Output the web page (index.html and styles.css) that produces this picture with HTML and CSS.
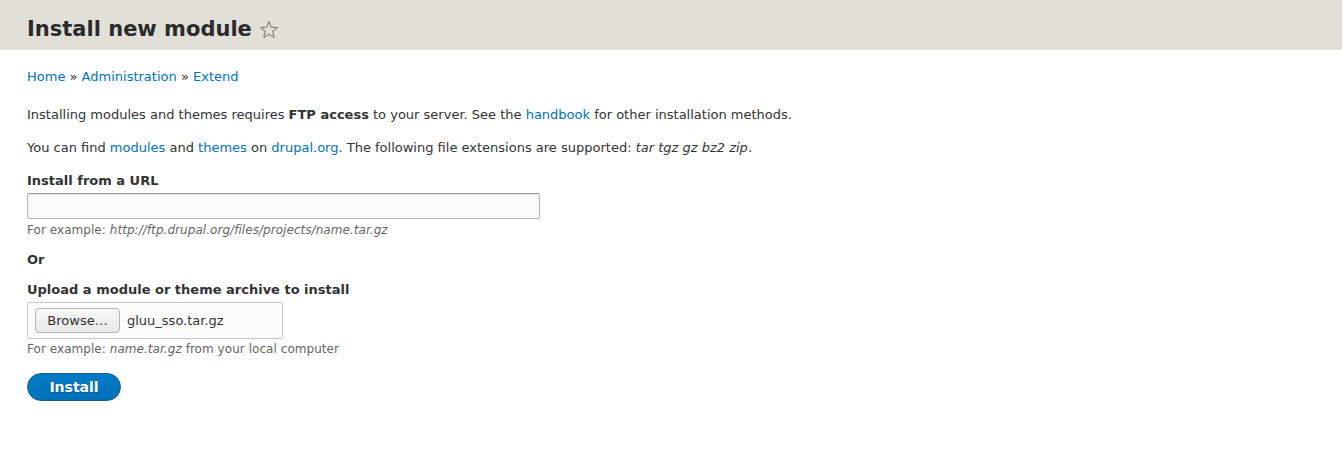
FILE: index.html
```html
<!DOCTYPE html>
<html>
<head>
<meta charset="utf-8">
<link rel="stylesheet" href="styles.css">
</head>
<body>
<header class="header">
  <h1 class="title">Install new module</h1>
  <svg class="star" width="20" height="20" viewBox="0 0 20 20"><path d="M10 1.5 L12.3 7.2 L18.4 7.6 L13.7 11.5 L15.2 17.5 L10 14.2 L4.8 17.5 L6.3 11.5 L1.6 7.6 L7.7 7.2 Z" fill="none" stroke="#8a8a80" stroke-width="1.2" stroke-linejoin="round"/></svg>
</header>
<main class="main">
  <nav class="breadcrumb"><a href="#">Home</a> » <a href="#">Administration</a> » <a href="#">Extend</a></nav>
  <p class="p1">Installing modules and themes requires <strong>FTP access</strong> to your server. See the <a href="#">handbook</a> for other installation methods.</p>
  <p class="p2">You can find <a href="#">modules</a> and <a href="#">themes</a> on <a href="#">drupal.org</a>. The following file extensions are supported: <em>tar tgz gz bz2 zip</em>.</p>
  <label class="label l1">Install from a URL</label>
  <input class="text-input" type="text">
  <div class="desc d1">For example: <em>http://ftp.drupal.org/files/projects/name.tar.gz</em></div>
  <div class="label or">Or</div>
  <label class="label l2">Upload a module or theme archive to install</label>
  <div class="file-box"><span class="browse">Browse…</span><span class="file-name">gluu_sso.tar.gz</span></div>
  <div class="desc d2">For example: <em>name.tar.gz</em> from your local computer</div>
  <button class="install">Install</button>
</main>
</body>
</html>
```

FILE: styles.css
```css
html, body { margin: 0; padding: 0; background: #fff; }
body { font-family: "DejaVu Sans", sans-serif; color: #333; font-size: 13px; }
a { color: #0074bd; text-decoration: none; }
.header { background: #e0e0d8; height: 50px; display: flex; align-items: center; padding: 9px 0 0 27px; box-sizing: border-box; }
.title { margin: 0; font-size: 21px; font-weight: bold; color: #2b2b2b; line-height: 1; }
.star { margin-left: 7px; margin-top: 0; }
.main { padding: 0 27px; }
.breadcrumb { margin-top: 18px; line-height: 18px; }
p { margin: 0; line-height: 18px; }
.p1 { margin-top: 20px; }
.p2 { margin-top: 15px; }
.label { display: block; font-weight: bold; line-height: 18px; }
.l1 { margin-top: 15px; }
.text-input { display: block; box-sizing: border-box; margin-top: 3px; width: 513px; height: 26px; border: 1px solid #b8b8b8; border-top-color: #999; border-radius: 2px; background: #fcfcfa; box-shadow: inset 0 1px 2px rgba(0,0,0,.1); padding: 0 6px; font: inherit; }
.desc { font-size: 12px; line-height: 16px; color: #666; letter-spacing: 0.05px; }
.d1 { margin-top: 3px; }
.or { margin-top: 13px; }
.l2 { margin-top: 12px; }
.file-box { margin-top: 3px; box-sizing: border-box; width: 256px; height: 37px; border: 1px solid #c8c8c8; border-radius: 2px; background: #fcfcfa; display: flex; align-items: center; padding-left: 7px; }
.browse { box-sizing: border-box; width: 85px; height: 25px; border: 1px solid #b5b5b5; border-radius: 4px; background: linear-gradient(#f8f8f6, #e8e8e6); display: flex; align-items: center; justify-content: center; color: #333; font-size: 13px; }
.file-name { margin-left: 7px; color: #333; }
.d2 { margin-top: 2px; }
.install { display: block; margin-top: 16px; box-sizing: border-box; width: 94px; height: 28px; border: 1px solid #1e5c90; border-radius: 20em; background: linear-gradient(#007bc6, #0071b8); color: #fff; font-family: "DejaVu Sans", sans-serif; font-weight: bold; font-size: 14px; text-shadow: 0 1px 0 rgba(0,0,0,.3); padding: 0; cursor: pointer; }
```
